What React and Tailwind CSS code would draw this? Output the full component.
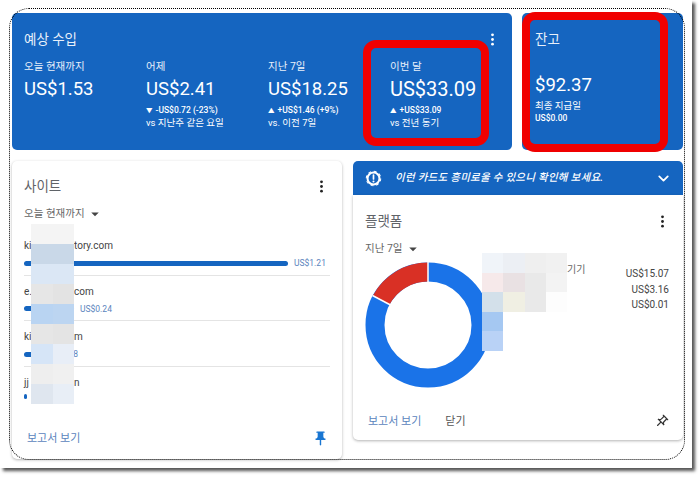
import { ChevronDown } from "lucide-react";
import { MdArrowDropDown, MdOutlinePushPin, MdPushPin } from "react-icons/md";

// Kebab menu icon
function Kebab({ className }) {
  return (
    <svg viewBox="0 0 4 14" className={className} fill="currentColor">
      <circle cx="2" cy="2" r="1.5" />
      <circle cx="2" cy="7" r="1.5" />
      <circle cx="2" cy="12" r="1.5" />
    </svg>
  );
}

// Scalloped badge with an exclamation mark
function AlertBadge({ className }) {
  return (
    <svg viewBox="0 0 20 20" className={className} fill="none" stroke="currentColor">
      <circle cx="10" cy="10" r="7" strokeWidth="2.4" />
      <circle cx="10" cy="10" r="8.5" strokeWidth="1.2" strokeDasharray="3.3 3.4" />
      <path d="M10 6v4.6" strokeWidth="2" strokeLinecap="round" />
      <circle cx="10" cy="13.6" r="1.2" fill="currentColor" stroke="none" />
    </svg>
  );
}

// Mosaic that hides the site names
function Mosaic({ className, gridClass, cells }) {
  return (
    <div className={`absolute grid ${gridClass} ${className}`}>
      {cells.map((cell, i) => (
        <div key={i} className={cell} />
      ))}
    </div>
  );
}

const stats = [
  { label: "오늘 현재까지", value: "US$1.53", size: "text-[18.5px]" },
  { label: "어제", value: "US$2.41", size: "text-[18.5px]", arrow: "▼", delta: "-US$0.72 (-23%)", note: "vs 지난주 같은 요일" },
  { label: "지난 7일", value: "US$18.25", size: "text-[18.5px]", arrow: "▲", delta: "+US$1.46 (+9%)", note: "vs. 이전 7일" },
  { label: "이번 달", value: "US$33.09", size: "text-[20px]", arrow: "▲", delta: "+US$33.09", note: "vs 전년 동기" },
];

const sites = [
  { head: "ki", tail: "tory.com", bar: "w-[264px]", amount: "US$1.21" },
  { head: "e.", tail: "com", bar: "w-[50px]", amount: "US$0.24" },
  { head: "ki", tail: "m", bar: "w-[16px]", amount: "US$0.08" },
  { head: "jj", tail: "n", bar: "w-[3px]", amount: "" },
];

const platforms = ["US$15.07", "US$3.16", "US$0.01"];

const siteMosaic = [
  "bg-[#f4f4f4]", "bg-[#f4f4f4]",
  "bg-[#c9d8e8]", "bg-[#c9d8e8]",
  "bg-[#dbe7f5]", "bg-[#dbe7f5]",
  "bg-[#e6e6e6]", "bg-[#e3e3e3]",
  "bg-[#b9d4f2]", "bg-[#bcd5f1]",
  "bg-[#e6e6e6]", "bg-[#e4e4e4]",
  "bg-[#d6e5f7]", "bg-[#e8eef7]",
  "bg-[#eeeeee]", "bg-[#f0f0f0]",
  "bg-[#dfe6ef]", "bg-[#e8eef6]",
];

const platformMosaic = [
  "bg-[#f0f4f9]", "bg-[#eceff4]", "bg-[#efefef]", "bg-[#f1f1f1]",
  "bg-[#f6e9ea]", "bg-[#e9e1e3]", "bg-[#e9e9e9]", "bg-[#f3f3f3]",
  "bg-[#d3e0ea]", "bg-[#f0efe3]", "bg-[#e9e9e9]", "bg-[#fdfdfd]",
  "bg-[#a5c8f2]", "bg-white", "bg-white", "bg-white",
  "bg-[#b9d2f6]", "bg-white", "bg-white", "bg-white",
];

export default function App() {
  return (
    <div className="relative w-[700px] h-[477px] bg-white overflow-hidden font-['Roboto','Noto_Sans_CJK_KR',sans-serif]">
      <div className="w-[692px] h-[468px] bg-white shadow-[3px_3px_3px_#555] pt-[13px] pl-[12px]">
        {/* Top row: blue cards */}
        <div className="flex gap-[10px]">
          <section className="relative w-[500px] h-[137px] bg-[#1565c0] rounded-[5px] text-white pl-[12px] pt-[17px]">
            <h2 className="text-[13.5px] leading-[18px] text-[#e8f0fa]">예상 수입</h2>
            <Kebab className="absolute right-[17px] top-[20px] w-[5px] h-[13px] text-white" />
            <div className="flex mt-[12px]">
              {stats.map((s) => (
                <div key={s.label} className="w-[122px]">
                  <div className="text-[10.5px] leading-[14px] text-[#e8f0fa]">{s.label}</div>
                  <div className={`${s.size} leading-[24px] mt-[3px]`}>{s.value}</div>
                  {s.delta && (
                    <div className="text-[8.5px] leading-[12px] mt-[3px] font-medium">
                      <span className="text-[6.5px] mr-[3px]">{s.arrow}</span>
                      {s.delta}
                    </div>
                  )}
                  {s.note && <div className="text-[9.5px] leading-[11px]">{s.note}</div>}
                </div>
              ))}
            </div>
          </section>

          <section className="w-[161px] h-[137px] bg-[#1565c0] rounded-[5px] text-white pl-[13px] pt-[17px]">
            <h2 className="text-[13.5px] leading-[18px] text-[#e8f0fa]">잔고</h2>
            <div className="text-[18.5px] leading-[24px] mt-[25px]">$92.37</div>
            <div className="text-[9.5px] leading-[12px] mt-[3px]">최종 지급일</div>
            <div className="text-[8.5px] leading-[12px] font-medium">US$0.00</div>
          </section>
        </div>

        {/* Bottom row */}
        <div className="flex gap-[11px] mt-[11px]">
          {/* Sites card */}
          <section className="relative w-[330px] h-[298px] bg-white rounded-[5px] shadow-[0_1px_3px_rgba(0,0,0,0.3)] px-[12px] pt-[16px] flex flex-col">
            <div className="flex justify-between items-center">
              <h2 className="text-[13.5px] leading-[18px] text-[#5f6368]">사이트</h2>
              <Kebab className="w-[5px] h-[13px] text-[#222] mr-[6px]" />
            </div>
            <div className="flex items-center text-[10.5px] leading-[14px] text-[#666] mt-[10px]">
              오늘 현재까지
              <MdArrowDropDown className="w-[18px] h-[18px] ml-[1px] text-[#444]" />
            </div>
            <div className="mt-[7px]">
              {sites.map((s, i) => (
                <div key={s.head + s.tail} className={`h-[45.5px] pt-[9px] ${i < 3 ? "border-b border-[#e4e4e4]" : ""}`}>
                  <div className="flex text-[10px] leading-[14px] text-[#444]">
                    <span className="w-[50px]">{s.head}</span>
                    {s.tail}
                  </div>
                  <div className="flex items-center gap-[6px] mt-[4px]">
                    <div className={`h-[5px] rounded-full bg-[#1565c0] ${s.bar}`} />
                    <span className="text-[8.5px] leading-[12px] text-[#5b84bd]">{s.amount}</span>
                  </div>
                </div>
              ))}
            </div>
            <div className="flex justify-between items-center mt-auto pb-[12px] pl-[3px] pr-[1px]">
              <span className="text-[11px] leading-[14px] text-[#5b84bd]">보고서 보기</span>
              <MdPushPin className="w-[17px] h-[17px] text-[#1976d2]" />
            </div>
            <Mosaic className="left-[19px] top-[63px] w-[43px] h-[180px]" gridClass="grid-cols-2 grid-rows-9" cells={siteMosaic} />
          </section>

          {/* Right column */}
          <div className="w-[330px]">
            <div className="h-[34px] bg-[#1565c0] rounded-t-[5px] flex items-center pl-[12px] pr-[11px] text-white">
              <AlertBadge className="w-[17px] h-[17px]" />
              <span className="ml-[13px] text-[10.5px] italic font-medium tracking-[0.25px]">이런 카드도 흥미로울 수 있으니 확인해 보세요.</span>
              <ChevronDown className="ml-auto w-[17px] h-[17px]" strokeWidth={2.5} />
            </div>
            <section className="relative h-[245px] bg-white rounded-b-[5px] shadow-[0_1px_3px_rgba(0,0,0,0.3)] px-[12px] pt-[17px] flex flex-col">
              <div className="flex justify-between items-center">
                <h2 className="text-[13.5px] leading-[18px] text-[#5f6368]">플랫폼</h2>
                <Kebab className="w-[5px] h-[13px] text-[#222] mr-[6px]" />
              </div>
              <div className="flex items-center text-[10.5px] leading-[14px] text-[#666] mt-[10px]">
                지난 7일
                <MdArrowDropDown className="w-[18px] h-[18px] ml-[1px] text-[#444]" />
              </div>
              <div className="flex mt-[4px]">
                <svg viewBox="0 0 126 126" className="w-[126px] h-[126px] shrink-0">
                  <circle cx="63" cy="63" r="53" fill="none" stroke="#1a73e8" strokeWidth="19" />
                  <path d="M63 10 A53 53 0 0 0 16.2 38.1" fill="none" stroke="#d93025" strokeWidth="19" />
                  <line x1="63" y1="0" x2="63" y2="20" stroke="white" strokeWidth="1.5" />
                  <line x1="7.5" y1="33.5" x2="25.5" y2="43" stroke="white" strokeWidth="1.5" />
                </svg>
                <div className="ml-auto mr-[2px] text-right text-[10px] leading-[15.5px] text-[#444] pt-[4px]">
                  {platforms.map((p) => (
                    <div key={p}>{p}</div>
                  ))}
                </div>
              </div>
              <span className="absolute left-[214px] top-[68px] text-[10px] leading-[14px] text-[#666]">기기</span>
              <div className="flex items-center mt-auto pb-[11px] pl-[3px]">
                <span className="text-[11px] leading-[14px] text-[#5b84bd]">보고서 보기</span>
                <span className="ml-[24px] text-[11px] leading-[14px] text-[#555]">닫기</span>
                <MdOutlinePushPin className="ml-auto mr-[2px] w-[15px] h-[15px] text-[#333] rotate-45" />
              </div>
              <Mosaic className="left-[129px] top-[58px] w-[85px] h-[98px]" gridClass="grid-cols-4 grid-rows-5" cells={platformMosaic} />
            </section>
          </div>
        </div>
      </div>

      {/* Dotted selection frame and red highlights drawn over the capture */}
      <div className="absolute left-[9px] top-[8px] w-[676px] h-[452px] rounded-[20px] border border-dotted border-black pointer-events-none" />
      <div className="absolute left-[363px] top-[40px] w-[126px] h-[106px] rounded-[13px] border-[8px] border-[#f00000] pointer-events-none" />
      <div className="absolute left-[522px] top-[12px] w-[146px] h-[140px] rounded-[13px] border-[8px] border-[#f00000] pointer-events-none" />
    </div>
  );
}
